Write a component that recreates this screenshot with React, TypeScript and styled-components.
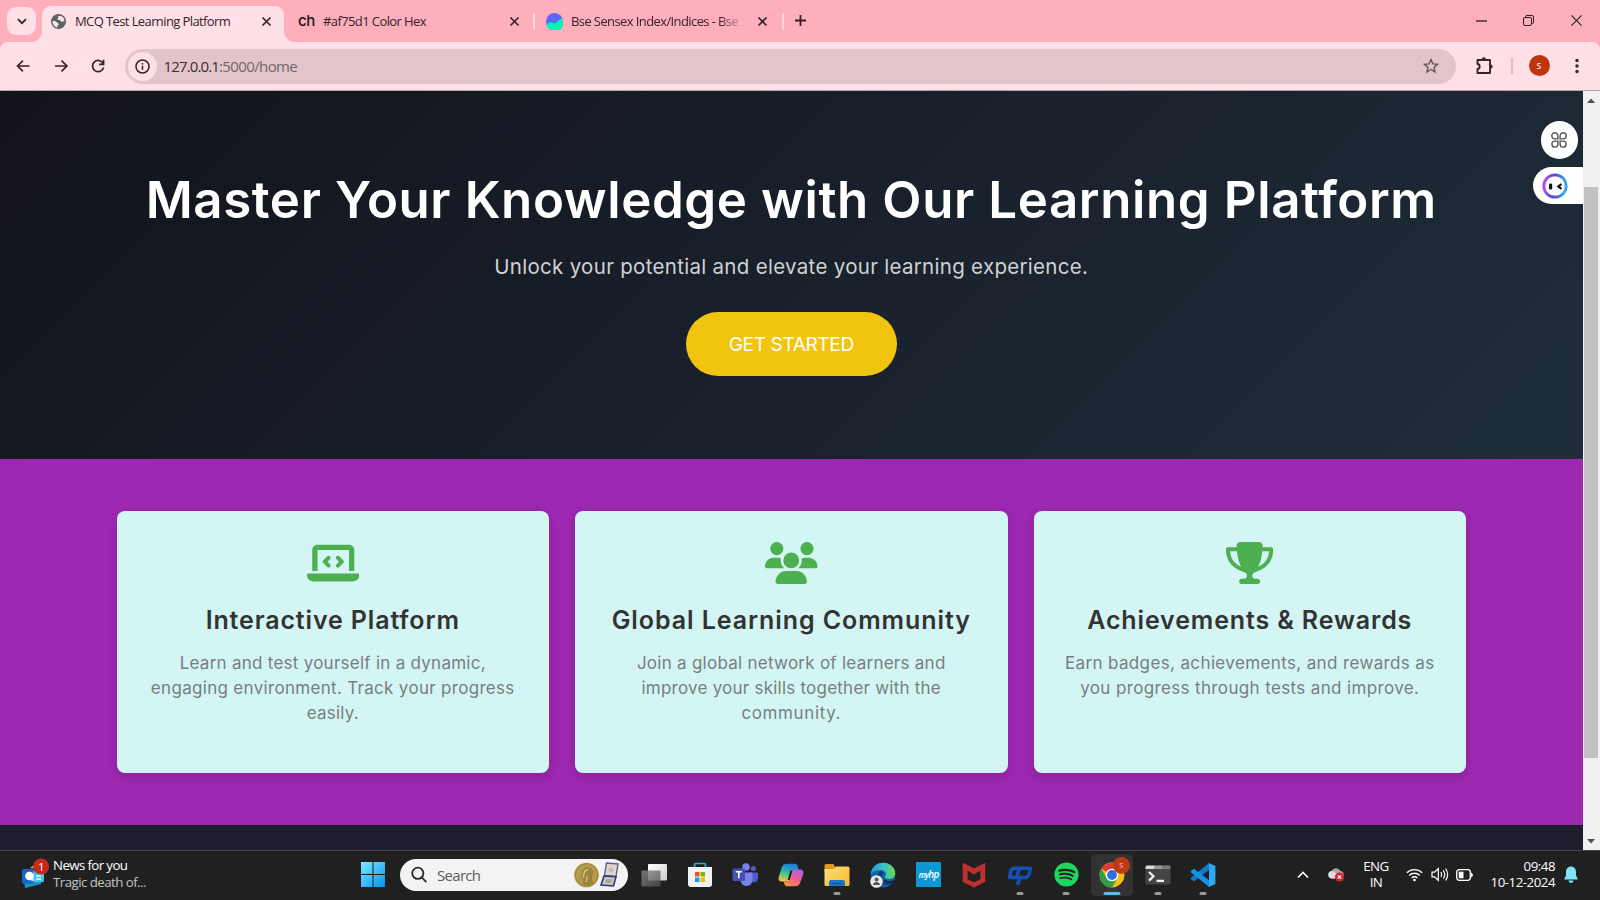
import React from "react";
import styled, { createGlobalStyle, css } from "styled-components";
import { FaLaptopCode, FaUsers, FaTrophy, FaSpotify } from "react-icons/fa6";

const Global = createGlobalStyle`
  * { box-sizing: border-box; }
  body { margin: 0; overflow: hidden; }
  svg { display: block; flex: none; }
`;

const ui = css`font-family: "Open Sans", "Noto Sans", sans-serif;`;

const Desktop = styled.div`
  width: 1600px;
  height: 900px;
  display: flex;
  flex-direction: column;
  overflow: hidden;
  ${ui}
`;

/* ---------- Browser tab strip ---------- */
const TabStrip = styled.div`
  height: 42px;
  flex: none;
  display: flex;
  align-items: flex-start;
  background: #ffaebc;
  padding-left: 7px;
  color: #33232a;
`;
const TabSearch = styled.div`
  width: 29px;
  height: 28px;
  margin: 7px 6px 0 0;
  border-radius: 9px;
  background: #ffe0e6;
  display: grid;
  place-items: center;
`;
const Tab = styled.div<{ $width: number; $pad: number; $padEnd: number; $active?: boolean }>`
  position: relative;
  width: ${(p) => p.$width}px;
  height: 36px;
  margin-top: 6px;
  padding: 0 ${(p) => p.$padEnd}px 6px ${(p) => p.$pad}px;
  display: flex;
  align-items: center;
  ${(p) =>
    p.$active &&
    css`
      background: #ffe0e6;
      border-radius: 9px 9px 0 0;
      &::before,
      &::after {
        content: "";
        position: absolute;
        bottom: 0;
        width: 10px;
        height: 10px;
      }
      &::before {
        left: -10px;
        background: radial-gradient(circle at 0 0, transparent 9.5px, #ffe0e6 10px);
      }
      &::after {
        right: -10px;
        background: radial-gradient(circle at 100% 0, transparent 9.5px, #ffe0e6 10px);
      }
    `}
`;
const TabTitle = styled.span<{ $gap: number; $fade?: boolean }>`
  flex: 1;
  min-width: 0;
  margin-left: ${(p) => p.$gap}px;
  font-size: 13px;
  line-height: 20px;
  letter-spacing: -0.6px;
  white-space: nowrap;
  overflow: hidden;
  ${(p) =>
    p.$fade &&
    css`
      margin-right: 13px;
      -webkit-mask-image: linear-gradient(90deg, #000 86%, transparent 100%);
      mask-image: linear-gradient(90deg, #000 86%, transparent 100%);
    `}
`;
const TextIcon = styled.span`
  width: 16px;
  font: 500 15px/20px Inter, sans-serif;
  letter-spacing: -0.3px;
  color: #1c1418;
`;
const TabDivider = styled.i`
  width: 2px;
  height: 17px;
  margin-top: 12.5px;
  border-radius: 1px;
  background: #ffd9e0;
`;
const NewTab = styled.div`margin: 15px 0 0 11px;`;
const WindowButtons = styled.div`
  margin-left: auto;
  display: flex;
  > * {
    width: 47.5px;
    height: 41px;
    display: grid;
    place-items: center;
  }
`;

/* ---------- Browser toolbar ---------- */
const ToolbarBack = styled.div`
  flex: none;
  background: #ffaebc;
`;
const Toolbar = styled.div`
  height: 49px;
  display: flex;
  align-items: center;
  background: #ffe0e6;
  border-radius: 8px 8px 0 0;
  border-bottom: 1px solid #b9a1a8;
  color: #33232a;
`;
const NavButtons = styled.div`
  width: 125px;
  display: flex;
  gap: 21.5px;
  padding: 0 0 1px 15px;
`;
const Omnibox = styled.div`
  width: 1331px;
  height: 35px;
  border-radius: 18px;
  background: #e2c5ca;
  display: flex;
  align-items: center;
  padding: 0 17px 0 3px;
`;
const SiteInfo = styled.div`
  width: 29px;
  height: 29px;
  border-radius: 50%;
  background: #ffe0e6;
  display: grid;
  place-items: center;
  margin-right: 6.5px;
`;
const Url = styled.span`
  flex: 1;
  font-size: 15px;
  letter-spacing: -0.62px;
  color: #74656a;
  b { font-weight: 400; letter-spacing: -0.86px; color: #3a2d32; }
`;
const ToolbarActions = styled.div`
  flex: 1;
  display: flex;
  align-items: center;
  padding: 0 0 1px 19px;
`;
const Separator = styled.i`
  width: 1.5px;
  height: 16px;
  background: #ffaebc;
  margin: 0 16px 0 16px;
`;
const Avatar = styled.div`
  width: 21px;
  height: 21px;
  border-radius: 50%;
  background: #bf360c;
  color: #fff;
  font-size: 10px;
  line-height: 20px;
  text-align: center;
  margin-right: 25px;
`;

/* ---------- Page ---------- */
const Viewport = styled.div`
  height: 759px;
  flex: none;
  display: flex;
`;
const Page = styled.main`
  width: 1582.5px;
  display: flex;
  flex-direction: column;
  font-family: Inter, sans-serif;
  text-align: center;
`;
const Hero = styled.section`
  position: relative;
  height: 368px;
  flex: none;
  background: linear-gradient(135deg, #13131b 0%, #18202b 50%, #1f2d3a 100%);
  display: flex;
  flex-direction: column;
  align-items: center;
  padding-top: 78px;
`;
const HeroTitle = styled.h1`
  margin: 0;
  font-size: 51px;
  line-height: 62px;
  font-weight: 600;
  letter-spacing: 0.6px;
  color: #fff;
  white-space: nowrap;
`;
const HeroText = styled.p`
  margin: 19px 0 0;
  font-size: 20.5px;
  line-height: 34px;
  letter-spacing: 0.3px;
  color: #d0d1d3;
`;
const HeroButton = styled.button`
  width: 211px;
  height: 63.5px;
  margin-top: 28px;
  border: 0;
  border-radius: 32px;
  background: #f1c40f;
  color: #fff;
  font: 400 19.2px Inter, sans-serif;
  letter-spacing: -0.45px;
`;
const FloatRound = styled.div`
  position: absolute;
  right: 4.5px;
  top: 30px;
  width: 37.5px;
  height: 37.5px;
  border-radius: 50%;
  background: #fff;
  display: grid;
  place-items: center;
`;
const FloatPill = styled.div`
  position: absolute;
  right: 0;
  top: 76px;
  width: 49.5px;
  height: 37px;
  border-radius: 19px 0 0 19px;
  background: #fff;
  padding: 6px 0 0 9px;
`;
const Features = styled.section`
  height: 366px;
  flex: none;
  background: #9c27b0;
  padding: 52px 116.5px;
  display: grid;
  grid-template-columns: repeat(3, 1fr);
  gap: 26px;
`;
const Card = styled.article`
  background: #d3f6f4;
  border-radius: 8px;
  box-shadow: 0 4px 10px rgba(0, 0, 0, 0.12);
  display: flex;
  flex-direction: column;
  align-items: center;
  padding-top: 31px;
`;
const CardIcon = styled.div<{ $width: number }>`
  color: #4caf50;
  svg { width: ${(p) => p.$width}px; height: 42px; }
`;
const CardTitle = styled.h3<{ $track: number }>`
  margin: 20px 0 15px;
  font-size: 25px;
  line-height: 32px;
  font-weight: 600;
  letter-spacing: ${(p) => p.$track}px;
  color: #333;
  white-space: nowrap;
`;
const CardLine = styled.span<{ $track: number }>`
  font-size: 17px;
  line-height: 25px;
  letter-spacing: ${(p) => p.$track}px;
  color: #777f7f;
  white-space: nowrap;
`;
const PageFooter = styled.footer`
  flex: 1;
  background: #1e1e2f;
`;
const Scrollbar = styled.div`
  width: 17.5px;
  background: #f1f1f1;
  display: flex;
  flex-direction: column;
  align-items: center;
  padding: 7px 0 6px;
`;
const Thumb = styled.div`
  width: 14px;
  height: 571px;
  margin: 84px 1px auto 0;
  background: #c1c1c1;
`;

/* ---------- Taskbar ---------- */
const Taskbar = styled.div`
  height: 50px;
  flex: none;
  display: flex;
  align-items: center;
  padding-bottom: 1.5px;
  background: #202020;
  border-top: 1px solid #45454a;
  color: #fff;
`;
const News = styled.div`
  width: 350px;
  display: flex;
  align-items: center;
  gap: 3px;
  padding: 0 0 1px 21px;
  font-size: 13.3px;
  line-height: 17px;
  letter-spacing: -0.62px;
`;
const NewsText = styled.div`
  display: flex;
  flex-direction: column;
  small { font-size: inherit; color: #c4c4c4; letter-spacing: -0.55px; }
`;
const Start = styled.div`
  width: 50px;
  padding-left: 11px;
`;
const SearchBox = styled.div`
  width: 228px;
  height: 32px;
  border-radius: 16px;
  background: #f3f3f3;
  color: #5c5c5c;
  display: flex;
  align-items: center;
  padding: 0 9px 0 10px;
  font-size: 15px;
  letter-spacing: -0.7px;
  span { flex: 1; margin-left: 9px; }
`;
const Apps = styled.div`
  display: flex;
  margin-left: 3px;
`;
const AppSlot = styled.div<{ $active?: boolean }>`
  position: relative;
  width: 41.8px;
  margin: 0 2px;
  height: 42px;
  border-radius: 5px;
  display: grid;
  place-items: center;
  background: ${(p) => (p.$active ? "#343235" : "transparent")};
`;
const Running = styled.i<{ $active?: boolean }>`
  position: absolute;
  bottom: 1px;
  left: 50%;
  transform: translateX(-50%);
  width: ${(p) => (p.$active ? 17 : 7)}px;
  height: 3px;
  border-radius: 2px;
  background: ${(p) => (p.$active ? "#5cbcf0" : "#9a9a9a")};
`;
const HpTile = styled.div`
  width: 25px;
  height: 25px;
  background: #0a97d6;
  color: #fff;
  font: italic 600 10px/24px "Open Sans", sans-serif;
  letter-spacing: -0.7px;
  text-align: center;
  small { font-size: 8px; }
`;
const ChromeBadge = styled.div`
  position: absolute;
  right: 3px;
  top: 3px;
  width: 17px;
  height: 17px;
  border-radius: 50%;
  background: #bc3a12;
  color: #fbd;
  font-size: 8.5px;
  line-height: 16px;
  text-align: center;
`;
const Tray = styled.div`
  margin-left: auto;
  display: flex;
  align-items: center;
  padding-right: 13px;
`;
const TrayText = styled.div<{ $width: number; $align: string }>`
  width: ${(p) => p.$width}px;
  text-align: ${(p) => p.$align};
  padding-bottom: 1px;
  font-size: 13.3px;
  line-height: 16.7px;
  letter-spacing: -0.5px;
`;
const TraySlot = styled.div<{ $width: number }>`
  width: ${(p) => p.$width}px;
  display: grid;
  place-items: center;
`;

const Close = () => (
  <svg width="11" height="11" viewBox="0 0 11 11" stroke="#33232a" strokeWidth="1.7">
    <path d="M1.5 1.5l8 8M9.5 1.5l-8 8" />
  </svg>
);

type Feature = {
  icon: React.ReactNode;
  iconWidth: number;
  title: string;
  track: number;
  lines: [string, number][];
};

const features: Feature[] = [
  {
    icon: <FaLaptopCode />,
    iconWidth: 52.5,
    title: "Interactive Platform",
    track: 0.86,
    lines: [
      ["Learn and test yourself in a dynamic,", 0.26],
      ["engaging environment. Track your progress", 0.31],
      ["easily.", 0.2],
    ],
  },
  {
    icon: <FaUsers />,
    iconWidth: 52.5,
    title: "Global Learning Community",
    track: 0.92,
    lines: [
      ["Join a global network of learners and", 0.26],
      ["improve your skills together with the", 0.23],
      ["community.", 0.62],
    ],
  },
  {
    icon: <FaTrophy />,
    iconWidth: 47.25,
    title: "Achievements & Rewards",
    track: 0.86,
    lines: [
      ["Earn badges, achievements, and rewards as", 0.37],
      ["you progress through tests and improve.", 0.36],
    ],
  },
];

const TaskView = () => (
  <svg width="26" height="24" viewBox="0 0 26 24">
    <defs>
      <linearGradient id="tv1" x1="0" y1="0" x2="1" y2="1"><stop stopColor="#fff" /><stop offset="1" stopColor="#ccc" /></linearGradient>
      <linearGradient id="tv2" x1="0" y1="0" x2="1" y2="1"><stop stopColor="#8a8a8a" /><stop offset="1" stopColor="#4c4c4c" /></linearGradient>
    </defs>
    <rect x="7" y="1" width="19" height="16.5" rx="1" fill="url(#tv1)" />
    <rect x="0.5" y="7.5" width="19" height="16" rx="1" fill="url(#tv2)" opacity=".8" />
  </svg>
);
const Store = () => (
  <svg width="26" height="26" viewBox="0 0 26 26">
    <path d="M7.5 6V2.8a1.3 1.3 0 0 1 1.3-1.3h8.4a1.3 1.3 0 0 1 1.3 1.3V6" fill="none" stroke="#2fa9d8" strokeWidth="1.7" />
    <path d="M1 5h24v17a3 3 0 0 1-3 3H4a3 3 0 0 1-3-3z" fill="#f3f3f3" />
    <path fill="#f25022" d="M8 10h4.5v4.5H8z" />
    <path fill="#7fba00" d="M13.5 10H18v4.5h-4.5z" />
    <path fill="#00a4ef" d="M8 15.5h4.5V20H8z" />
    <path fill="#ffb900" d="M13.5 15.5H18V20h-4.5z" />
  </svg>
);
const Teams = () => (
  <svg width="26" height="24" viewBox="0 0 26 24">
    <circle cx="21.3" cy="5.5" r="2.6" fill="#5059c9" />
    <path d="M17 9.5h8a1 1 0 0 1 1 1v5a4 4 0 0 1-7 2.5z" fill="#5059c9" />
    <circle cx="14" cy="4" r="3.7" fill="#7b83eb" />
    <path d="M9 9.5h10.5a1 1 0 0 1 1 1V17a6 6 0 0 1-12 0v-6.5z" fill="#7b83eb" />
    <rect x="0.5" y="5.5" width="12.5" height="12.5" rx="1.2" fill="#4650b4" />
    <path d="M3.8 8.8h6M6.8 8.8v6.4" stroke="#fff" strokeWidth="1.6" />
  </svg>
);
const Copilot = () => (
  <svg width="26" height="24" viewBox="0 0 26 24">
    <defs>
      <linearGradient id="cp1" x1="0.5" y1="0" x2="0.2" y2="1"><stop stopColor="#1c7fe0" /><stop offset=".5" stopColor="#35bf9a" /><stop offset="1" stopColor="#f4cc2a" /></linearGradient>
      <linearGradient id="cp2" x1="0.8" y1="0" x2="0.3" y2="1"><stop stopColor="#a65ff0" /><stop offset=".5" stopColor="#ef5b93" /><stop offset="1" stopColor="#fb8a4c" /></linearGradient>
    </defs>
    <path d="M9 .8h8c1.800 0 2.400 1.200 2.800 2.700l.9 3.200h-3c-1.700 0-2.400.9-2.900 2.500l-2.400 7c-.6 1.700-1.400 2.300-3 2.300H4.200C1.100 18.500 0 16.500.9 13.500L3.900 4.300C4.700 1.900 6.300.8 9 .8z" fill="url(#cp1)" />
    <path d="M17 23.200H9c-1.800 0-2.400-1.200-2.800-2.700l-.6-2h3c1.700 0 2.500-.8 3-2.400l2.600-7.200c.6-1.700 1.400-2.300 3-2.300h4.600c3.100 0 4.200 2 3.300 5l-3 8.100c-.8 2.400-2.400 3.500-5.100 3.500z" fill="url(#cp2)" />
    <path d="M14.300 7.500h-2l-2.600 9.500h2l2.600-9z" fill="#202020" />
  </svg>
);
const Explorer = () => (
  <svg width="26" height="24" viewBox="0 0 26 24">
    <defs><linearGradient id="ex1" x1="0" y1="0" x2="1" y2="1"><stop stopColor="#ffe07a" /><stop offset="1" stopColor="#f7b82e" /></linearGradient></defs>
    <path d="M0.5 2.5A1.500 1.500 0 0 1 2 1h7.500l1.500 2.500v5H.5z" fill="#d9981f" />
    <path d="M.5 6H9.500L12 3.500H24A1.500 1.500 0 0 1 25.500 5v16.500A1.500 1.500 0 0 1 24 23H2a1.500 1.500 0 0 1-1.500-1.500z" fill="url(#ex1)" />
    <path d="M5 23v-4a2 2 0 0 1 2-2h12a2 2 0 0 1 2 2v4z" fill="#1878c8" />
    <path d="M8.500 20.500h9" stroke="#0f5090" strokeWidth="1.200" />
  </svg>
);
const Edge = () => (
  <svg width="26" height="26" viewBox="0 0 26 26">
    <defs>
      <linearGradient id="ed1" x1="0" y1="0.4" x2="1" y2="0.5"><stop stopColor="#2796dc" /><stop offset=".5" stopColor="#37c6c9" /><stop offset="1" stopColor="#66d84c" /></linearGradient>
    </defs>
    <circle cx="13" cy="13" r="12.300" fill="#1264b0" />
    <path d="M15 17.500c1.500 1.700 6 2.300 9.500.5l-.8 2.200c-3 2.200-8.500 1.700-9.700-2z" fill="#202020" />
    <path d="M.8 12C1.500 5.500 6.500.7 13 .7c7 0 12.300 4.800 12.300 10.600 0 3.500-2.700 5.700-6 5.700-2.600 0-4.300-.9-4.300-2 0-.8 1-1.200 1-3 0-2.200-2.200-4-5.200-4C6.500 8 2.500 9.500.8 12z" fill="url(#ed1)" />
    <path d="M10 9.500c-4 2.500-3.500 9 .5 12 4 2.600 9.500 1.500 13-1.500-4.500 1.300-9.500 0-11-3.500-1-2.500-.2-4.500 1-6-1-.9-2.300-1.200-3.500-1z" fill="#0c3f7c" />
    <circle cx="6.500" cy="19.500" r="6.300" fill="#e9e9e9" />
    <circle cx="6.500" cy="17.500" r="2" fill="#555" />
    <path d="M3 23c0-4 7-4 7 0z" fill="#555" />
  </svg>
);
const McAfee = () => (
  <svg width="24" height="26" viewBox="0 0 24 26">
    <path d="M.7.8L12 6.200 23.300.8v19L12 25.400.7 19.800z" fill="#c0302f" />
    <path d="M5.600 8.500L12 12.500l6.400-4v8.800L12 20.300l-6.400-3z" fill="#202020" />
  </svg>
);
const Pc = () => (
  <svg width="26" height="24" viewBox="0 0 26 24" fill="none" stroke="#1450b4" strokeWidth="3.600" strokeLinejoin="round">
    <path d="M11.500 5.200H6.500L4 7.400 2.500 14.500h7.200L12.200 5.200H23.500L22 11.700l-2.700 2.800h-6.200L10.200 22" />
  </svg>
);
const Chrome = () => (
  <svg width="26" height="26" viewBox="0 0 26 26">
    <circle cx="13" cy="13" r="12.400" fill="#f9bf17" />
    <path d="M13 13L2.300 6.800A12.400 12.400 0 0 1 23.700 6.800H13z" fill="#e33b2e" />
    <path d="M2.300 6.800A12.400 12.400 0 0 0 13 25.400l5.400-9.300L13 13 7.600 16z" fill="#2da04c" />
    <circle cx="13" cy="13" r="6.300" fill="#fff" />
    <circle cx="13" cy="13" r="4.900" fill="#2f6fe0" />
  </svg>
);
const Terminal = () => (
  <svg width="26" height="20" viewBox="0 0 26 20">
    <rect x=".5" y=".5" width="25" height="19" rx="1.500" fill="#454545" />
    <path d="M2 .5h7V4H.5V2A1.500 1.500 0 0 1 2 .5z" fill="#d8d8d8" />
    <path d="M9 .5h8V4H9z" fill="#9a9a9a" />
    <path d="M17 .5h7A1.500 1.500 0 0 1 25.500 2v2H17z" fill="#777" />
    <path d="M4 7l4.500 4.300L4 15.600M11.500 15.800h7.500" fill="none" stroke="#f4f4f4" strokeWidth="2.200" />
  </svg>
);
const Code = () => (
  <svg width="26" height="26" viewBox="0 0 26 26">
    <path d="M19 1v7L4 19.200.8 17.300v-1.600z" fill="#0f7cc8" />
    <path d="M19 25v-7L4 6.800.8 8.700v1.600z" fill="#1691de" />
    <path d="M18.300.7L25.400 4v18l-7.100 3.300c.5-.3.7-.8.7-1.500V2.200c0-.7-.2-1.200-.7-1.500z" fill="#32a8f2" />
  </svg>
);

export default function App() {
  return (
    <Desktop>
      <Global />
      <TabStrip>
        <TabSearch>
          <svg width="10" height="7" viewBox="0 0 10 7" fill="none" stroke="#33232a" strokeWidth="1.800"><path d="M1 1.200l4 4 4-4" /></svg>
        </TabSearch>
        <Tab $width={242} $pad={9} $padEnd={12} $active>
          <svg width="15" height="15" viewBox="0 0 15 15">
            <circle cx="7.500" cy="7.500" r="7.500" fill="#5b6066" />
            <path d="M8.300 1.800c-1 .4-1.500 1-1.200 1.900.3.800-.9.800-.7 1.800.2.800 1.400.5 2.200.6.900.2.700 1.400 1.700 1.600 1.100.2 2-.5 3.100-.4.300-3-1.800-5.300-5.100-5.500zM1.500 7c1.600-.2 3.700.1 4.300 1.300.5 1 2 .6 1.900 1.900-.1.900-1.100 1-1.200 1.900-.1.500-.1 1-.2 1.400C3.500 12.900 1.400 10.200 1.500 7z" fill="#ffe0e6" />
          </svg>
          <TabTitle $gap={9}>MCQ Test Learning Platform</TabTitle>
          <Close />
        </Tab>
        <Tab $width={249} $pad={14} $padEnd={13}>
          <TextIcon>ch</TextIcon>
          <TabTitle $gap={9}>#af75d1 Color Hex</TabTitle>
          <Close />
        </Tab>
        <TabDivider />
        <Tab $width={247} $pad={11} $padEnd={14}>
          <svg width="17" height="17" viewBox="0 0 17 17">
            <circle cx="8.500" cy="8.500" r="8.500" fill="#5b67f7" />
            <path d="M.5 11.200L4.500 9l4.300 1.500L15.800 5A8.500 8.500 0 1 1 .5 11.200z" fill="#0bf0b4" />
          </svg>
          <TabTitle $gap={8} $fade>Bse Sensex Index/Indices - Bse S</TabTitle>
          <Close />
        </Tab>
        <TabDivider />
        <NewTab>
          <svg width="11" height="11" viewBox="0 0 11 11" stroke="#33232a" strokeWidth="1.800"><path d="M5.500 0v11M0 5.500h11" /></svg>
        </NewTab>
        <WindowButtons>
          <div><svg width="11" height="2"><path d="M0 1h11" stroke="#111" strokeWidth="1.200" /></svg></div>
          <div>
            <svg width="11" height="11" viewBox="0 0 11 11" fill="none" stroke="#222">
              <rect x=".5" y="2.500" width="8" height="8" rx="1.500" />
              <path d="M2.500 2V1.700A1.200 1.200 0 0 1 3.700.5H9A1.500 1.500 0 0 1 10.500 2v5.300c0 .7-.5 1.200-1.200 1.200H9" />
            </svg>
          </div>
          <div><svg width="11" height="11" viewBox="0 0 11 11" stroke="#222" strokeWidth="1.100"><path d="M.4.4l10.200 10.200M10.600.4L.4 10.600" /></svg></div>
        </WindowButtons>
      </TabStrip>

      <ToolbarBack>
        <Toolbar>
          <NavButtons>
            {["M15 8H3M8.200 2.400L2.600 8l5.600 5.600", "M2 8h12M8.800 2.400L14.400 8l-5.600 5.600"].map((d) => (
              <svg key={d} width="16" height="16" viewBox="0 0 16.500 16" fill="none" stroke="#33232a" strokeWidth="1.700"><path d={d} /></svg>
            ))}
            <svg width="16" height="16" viewBox="0 0 16 16" fill="none" stroke="#33232a" strokeWidth="1.700">
              <path d="M13.200 5.600A5.600 5.600 0 1 0 13.600 9.500M13.600 1.800v4.500H9.100" />
            </svg>
          </NavButtons>
          <Omnibox>
            <SiteInfo>
              <svg width="15" height="15" viewBox="0 0 15 15" fill="none" stroke="#33232a" strokeWidth="1.500"><circle cx="7.500" cy="7.500" r="6.500" /><path d="M7.500 6.700v4M7.500 4v1.500" /></svg>
            </SiteInfo>
            <Url><b>127.0.0.1</b>:5000/home</Url>
            <svg width="16" height="16" viewBox="0 0 16 16" fill="none" stroke="#66575c" strokeWidth="1.400">
              <path d="M8 1.600l1.900 4.300 4.700.4-3.600 3.100 1.100 4.600L8 11.500 3.900 14 5 9.400 1.400 6.300l4.700-.4z" />
            </svg>
          </Omnibox>
          <ToolbarActions>
            <svg width="20" height="19" viewBox="0 0 20 19">
              <path d="M2.500 4H15v13H2.500v-4c2.900-.2 2.900-4.800 0-5z" fill="none" stroke="#33232a" strokeWidth="1.900" strokeLinejoin="round" />
              <path d="M6.800 3.300a2 2 0 0 1 4 0zM15.700 8.500a2 2 0 0 1 0 4z" fill="#33232a" />
            </svg>
            <Separator />
            <Avatar>s</Avatar>
            <svg width="4" height="16" viewBox="0 0 4 16" fill="#33232a"><circle cx="2" cy="2.500" r="1.700" /><circle cx="2" cy="8" r="1.700" /><circle cx="2" cy="13.500" r="1.700" /></svg>
          </ToolbarActions>
        </Toolbar>
      </ToolbarBack>

      <Viewport>
        <Page>
          <Hero>
            <HeroTitle>Master Your Knowledge with Our Learning Platform</HeroTitle>
            <HeroText>Unlock your potential and elevate your learning experience.</HeroText>
            <HeroButton>GET STARTED</HeroButton>
            <FloatRound>
              <svg width="16" height="16" viewBox="0 0 16 16" fill="none" stroke="#555" strokeWidth="1.400">
                <path d="M3.800.8A3 3 0 0 1 6.900 3.800v3.100H3.800a3 3 0 0 1 0-6.100zM12.200.8a3 3 0 0 1 0 6.100H9.100V3.800A3 3 0 0 1 12.200.8zM3.800 9.100h3.100v3.100a3 3 0 1 1-3.100-3.100zM9.100 9.100h3.100a3 3 0 1 1-3.100 3.100z" />
              </svg>
            </FloatRound>
            <FloatPill>
              <svg width="26" height="26" viewBox="0 0 26 26">
                <defs>
                  <linearGradient id="bot" x1="0" y1="0.7" x2="0.9" y2="0.8"><stop stopColor="#b04be8" /><stop offset=".5" stopColor="#5546e0" /><stop offset="1" stopColor="#38a6ee" /></linearGradient>
                </defs>
                <circle cx="13" cy="13" r="11.200" fill="none" stroke="url(#bot)" strokeWidth="2.800" />
                <rect x="7" y="10.500" width="3.200" height="6" rx="1.300" fill="#111" />
                <path d="M19.500 11l-3.200 2.500 3.200 2.300" fill="none" stroke="#111" strokeWidth="2.200" />
              </svg>
            </FloatPill>
          </Hero>
          <Features>
            {features.map((f) => (
              <Card key={f.title}>
                <CardIcon $width={f.iconWidth}>{f.icon}</CardIcon>
                <CardTitle $track={f.track}>{f.title}</CardTitle>
                {f.lines.map(([text, track]) => (
                  <CardLine key={text} $track={track}>{text}</CardLine>
                ))}
              </Card>
            ))}
          </Features>
          <PageFooter />
        </Page>
        <Scrollbar>
          <svg width="8" height="5"><path d="M0 5l4-4.500L8 5z" fill="#505050" /></svg>
          <Thumb />
          <svg width="8" height="5"><path d="M0 0l4 4.500L8 0z" fill="#505050" /></svg>
        </Scrollbar>
      </Viewport>

      <Taskbar>
        <News>
          <svg width="29" height="32" viewBox="0 0 29 32">
            <path d="M9 10l5-4 6 5z" fill="#d9a53a" />
            <path d="M2 14l20-1-2 13-16 4z" fill="#1893c9" />
            <rect x="1" y="11" width="12" height="15" rx="2" fill="#1668c4" />
            <rect x="12" y="13" width="11" height="11" rx="1.500" fill="#45c5ee" />
            <path d="M15 18h5M15 21h5" stroke="#e8fbff" strokeWidth="1.300" />
            <circle cx="8.500" cy="18" r="4.300" fill="#fff" />
            <path d="M9 22l3.500-1.500V23z" fill="#fff" />
            <circle cx="20" cy="8.500" r="8" fill="#c42b1c" />
            <text x="20" y="12.600" fill="#fff" fontSize="11.500" textAnchor="middle">1</text>
          </svg>
          <NewsText>
            News for you
            <small>Tragic death of...</small>
          </NewsText>
        </News>
        <Start>
          <svg width="24" height="25" viewBox="0 0 24 25">
            <defs><linearGradient id="win" x1="0" y1="0" x2="24" y2="25" gradientUnits="userSpaceOnUse"><stop stopColor="#7deaff" /><stop offset="1" stopColor="#0a90f0" /></linearGradient></defs>
            <path d="M0 0h11.500v12H0zM12.500 0H24v12H12.500zM0 13h11.500v12H0zM12.500 13H24v12H12.500z" fill="url(#win)" />
          </svg>
        </Start>
        <SearchBox>
          <svg width="18" height="18" viewBox="0 0 18 18" fill="none" stroke="#2b2b2b" strokeWidth="1.800"><circle cx="7.800" cy="7.300" r="5.600" /><path d="M11.800 11.400l4.500 4.800" /></svg>
          <span>Search</span>
          <svg width="46" height="28" viewBox="0 0 46 28">
            <circle cx="13.500" cy="14" r="12.300" fill="#b39b4b" />
            <circle cx="13.500" cy="14" r="11.300" fill="none" stroke="#9d873f" strokeWidth="1" />
            <path d="M9.500 22.500c1-3 0-4.500-.5-6l-1.500-1 1.500-2.500c0-5 3-7 6.500-6.500 4 .5 5.500 4 4 7.500-1 2.500-1 5 1 8-3 3-8 3-11 .5z" fill="#9a833c" />
            <path d="M10.500 16.500c0-4 1-7.500 4.500-8M13 21c1-2 1.500-4 1-6" fill="none" stroke="#d9c67e" strokeWidth="1.400" />
            <path d="M33.500 2l11.500 1-2 12.500-11.500-1z" fill="#dcd6cf" stroke="#5a5f9c" strokeWidth="1.400" />
            <path d="M31 15l12 .8L40.500 25 28 24z" fill="#c9c2bd" stroke="#33387e" strokeWidth="1.600" />
            <ellipse cx="38" cy="9" rx="2.500" ry="2.500" fill="#c3bcb2" />
            <ellipse cx="35.500" cy="20" rx="3" ry="2" fill="#a9a39c" />
          </svg>
        </SearchBox>
        <Apps>
          <AppSlot><TaskView /></AppSlot>
          <AppSlot><Store /></AppSlot>
          <AppSlot><Teams /></AppSlot>
          <AppSlot><Copilot /></AppSlot>
          <AppSlot><Explorer /><Running /></AppSlot>
          <AppSlot><Edge /></AppSlot>
          <AppSlot><HpTile><small>my</small>hp</HpTile></AppSlot>
          <AppSlot><McAfee /></AppSlot>
          <AppSlot><Pc /><Running /></AppSlot>
          <AppSlot><FaSpotify size={25} color="#1ed760" /><Running /></AppSlot>
          <AppSlot $active><Chrome /><ChromeBadge>s</ChromeBadge><Running $active /></AppSlot>
          <AppSlot><Terminal /><Running /></AppSlot>
          <AppSlot><Code /><Running /></AppSlot>
        </Apps>
        <Tray>
          <TraySlot $width={34}>
            <svg width="12" height="8" viewBox="0 0 12 8" fill="none" stroke="#fff" strokeWidth="1.600"><path d="M1 6.500l5-5 5 5" /></svg>
          </TraySlot>
          <TraySlot $width={31}>
            <svg width="18" height="15" viewBox="0 0 18 15">
              <path d="M4.500 11.500a3.800 3.800 0 0 1 0-7.500A5 5 0 0 1 13.500 4a3.800 3.800 0 0 1 0 7.500z" fill="#a8a8a8" />
              <path d="M4.500 11.500a3.800 3.800 0 0 1 0-7.500c3 0 5 2.500 7 7.500z" fill="#dedede" />
              <circle cx="12.500" cy="10" r="4.600" fill="#d8262f" />
              <path d="M10.800 8.300l3.400 3.400M14.200 8.300l-3.400 3.400" stroke="#fff" strokeWidth="1.200" />
            </svg>
          </TraySlot>
          <TrayText $width={50} $align="center">ENG<br />IN</TrayText>
          <TraySlot $width={27}>
            <svg width="17" height="14" viewBox="0 0 17 14" fill="none" stroke="#fff" strokeWidth="1.300">
              <path d="M.8 4.800a10.800 10.800 0 0 1 15.400 0M3.200 7.500a7.400 7.400 0 0 1 10.600 0M5.600 10a4 4 0 0 1 5.800 0" />
              <circle cx="8.500" cy="12" r="1.300" fill="#fff" stroke="none" />
            </svg>
          </TraySlot>
          <TraySlot $width={23}>
            <svg width="18" height="15" viewBox="0 0 18 15" fill="none" stroke="#fff" strokeWidth="1.200">
              <path d="M1 5.200h2.500L7.300 1.700v11.600L3.500 9.800H1zM9.800 5.200c1 1.400 1 3.200 0 4.600M12.200 3.300c2 2.600 2 5.800 0 8.400M14.500 1.500c2.700 3.700 2.700 8.300 0 12" />
            </svg>
          </TraySlot>
          <TraySlot $width={26}>
            <svg width="17" height="12" viewBox="0 0 17 12">
              <rect x=".7" y=".7" width="13.600" height="10.600" rx="2.500" fill="none" stroke="#fff" strokeWidth="1.300" />
              <rect x="2.700" y="2.700" width="4.800" height="6.600" fill="#fff" />
              <path d="M15 4v4c1.800 0 1.800-4 0-4z" fill="#fff" stroke="#fff" />
            </svg>
          </TraySlot>
          <TrayText $width={78} $align="right">09:48<br />10-12-2024</TrayText>
          <TraySlot $width={32}>
            <svg width="14" height="17" viewBox="0 0 14 17" fill="#7fe3fb"><path d="M7 .5a5 5 0 0 1 5 5v4l1.700 3.300c.1.500-.1.700-.5.700H.8c-.4 0-.6-.2-.5-.7L2 9.500v-4a5 5 0 0 1 5-5zM4.500 14.500h5a2.500 2.500 0 0 1-5 0z" /></svg>
          </TraySlot>
        </Tray>
      </Taskbar>
    </Desktop>
  );
}
